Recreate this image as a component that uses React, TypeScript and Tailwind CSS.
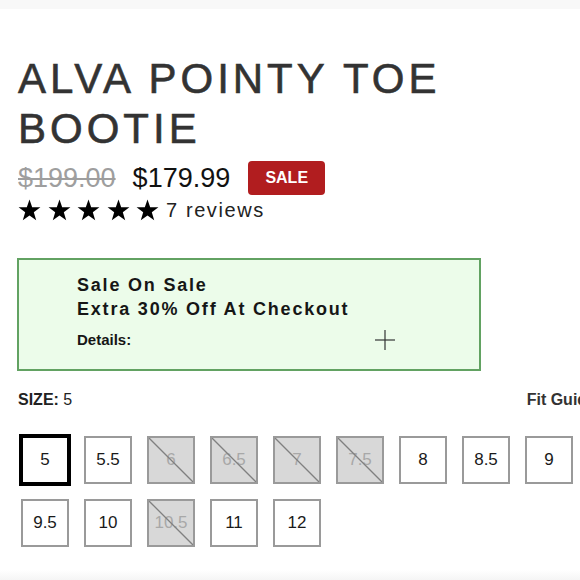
import React from "react";

const font = { fontFamily: '"Liberation Sans", Arial, sans-serif' };

function Star() {
  return (
    <svg width="23" height="22" viewBox="0 0 24 23" className="block">
      <polygon
        points="12,0.5 14.8,8.6 23.4,8.7 16.5,13.9 19,22.2 12,17.2 5,22.2 7.5,13.9 0.6,8.7 9.2,8.6"
        fill="#000"
      />
    </svg>
  );
}

type Size = { label: string; disabled?: boolean; selected?: boolean };

const row1: Size[] = [
  { label: "5", selected: true },
  { label: "5.5" },
  { label: "6", disabled: true },
  { label: "6.5", disabled: true },
  { label: "7", disabled: true },
  { label: "7.5", disabled: true },
  { label: "8" },
  { label: "8.5" },
  { label: "9" },
];
const row2: Size[] = [
  { label: "9.5" },
  { label: "10" },
  { label: "10.5", disabled: true },
  { label: "11" },
  { label: "12" },
];

function SizeBox({ s }: { s: Size }) {
  if (s.disabled) {
    return (
      <div className="relative w-[48px] h-[48px] shrink-0 border-2 border-[#9a9a9a] bg-[#d8d8d8] flex items-center justify-center text-[17px] text-[#a8a8a8]">
        <span>{s.label}</span>
        <svg className="absolute inset-0 w-full h-full" viewBox="0 0 44 44" preserveAspectRatio="none">
          <line x1="0" y1="0" x2="44" y2="44" stroke="#808080" strokeWidth="1.3" />
        </svg>
      </div>
    );
  }
  return (
    <div
      className={
        "w-[48px] h-[48px] shrink-0 border-2 bg-white flex items-center justify-center text-[17px] text-[#1a1a1a] " +
        (s.selected ? "border-black outline-2 outline-black" : "border-[#9a9a9a]")
      }
    >
      {s.label}
    </div>
  );
}

export default function App() {
  return (
    <div className="w-[580px] h-[580px] overflow-hidden bg-white relative" style={font}>
      <div className="h-[9px] bg-[#f8f8f8]" />
      <div className="pl-[18px] mt-[45px]">
        <h1 className="text-[42px] leading-[50px] tracking-[0.095em] text-[#333] font-normal [-webkit-text-stroke:0.6px_#333]">
          ALVA POINTY TOE
          <br />
          BOOTIE
        </h1>
        <div className="flex items-center mt-[7px] h-[34px]">
          <span className="text-[27px] text-[#9e9e9e] line-through decoration-[1.5px]">$199.00</span>
          <span className="text-[27px] text-[#111] ml-[17px]">$179.99</span>
          <span className="ml-[18px] h-[34px] w-[77px] rounded-[4px] bg-[#b11d1f] text-white font-bold text-[16px] flex items-center justify-center">
            SALE
          </span>
        </div>
        <div className="flex items-center mt-[2px] h-[25px]">
          <div className="flex gap-[6.5px]">
            <Star />
            <Star />
            <Star />
            <Star />
            <Star />
          </div>
          <span className="ml-[7px] text-[20px] tracking-[1.6px] text-[#222]">7 reviews</span>
        </div>
      </div>

      <div className="ml-[17px] mt-[36px] w-[464px] h-[113px] border-2 border-[#62a262] bg-[#ecfcea] pl-[58px] pt-[13px]">
        <div className="text-[18px] leading-[24px] font-bold tracking-[0.1em] text-[#161616]">
          Sale On Sale
          <br />
          Extra 30% Off At Checkout
        </div>
        <div className="flex items-center justify-between w-[318px] mt-[9px] h-[20px]">
          <span className="text-[15px] font-bold text-[#161616]">Details:</span>
          <svg width="20" height="20" viewBox="0 0 20 20">
            <line x1="10" y1="0" x2="10" y2="20" stroke="#333" strokeWidth="1.2" />
            <line x1="0" y1="10" x2="20" y2="10" stroke="#333" strokeWidth="1.2" />
          </svg>
        </div>
      </div>

      <div className="pl-[18px] mt-[17px]">
        <div className="w-[578px] flex justify-between items-center h-[24px] text-[16px] text-[#222]">
          <span>
            <span className="font-bold">SIZE:</span> 5
          </span>
          <span className="font-bold text-[#333]">Fit Guide</span>
        </div>
      </div>

      <div className="pl-[21px] mt-[24px] flex flex-col gap-[15px]">
        <div className="flex gap-[15px]">
          {row1.map((s) => (
            <SizeBox key={s.label} s={s} />
          ))}
        </div>
        <div className="flex gap-[15px]">
          {row2.map((s) => (
            <SizeBox key={s.label} s={s} />
          ))}
        </div>
      </div>
      <div className="absolute left-0 right-0 bottom-0 h-[10px] bg-gradient-to-b from-white to-[#f5f5f5]" />
    </div>
  );
}
